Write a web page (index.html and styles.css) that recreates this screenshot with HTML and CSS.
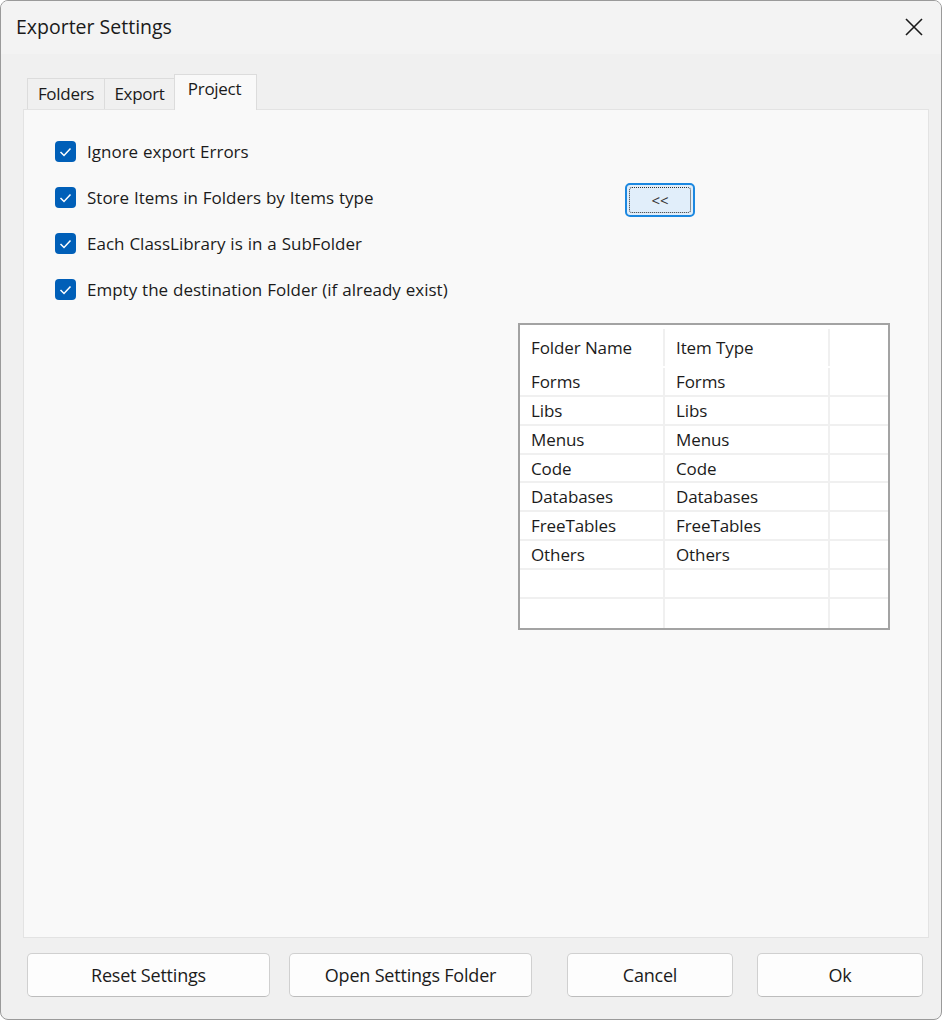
FILE: index.html
```html
<!DOCTYPE html>
<html>
<head>
<meta charset="utf-8">
<link rel="stylesheet" href="styles.css">
</head>
<body>
<div class="window">
  <div class="titlebar">
    <span class="title">Exporter Settings</span>
    <svg class="close" width="20" height="20" viewBox="0 0 20 20"><path d="M2 2 L18 18 M18 2 L2 18" stroke="#1a1a1a" stroke-width="1.6" fill="none"/></svg>
  </div>
  <div class="main">
    <div class="tabs">
      <div class="tab t1">Folders</div>
      <div class="tab t2">Export</div>
      <div class="tab active">Project</div>
    </div>
    <div class="panel">
      <div class="top">
        <div class="checks">
          <label class="check"><span class="box"><svg width="13" height="10" viewBox="0 0 13 10"><path d="M1.5 5 L5 8.5 L11.5 1.5" stroke="#fff" stroke-width="1.5" fill="none"/></svg></span>Ignore export Errors</label>
          <label class="check"><span class="box"><svg width="13" height="10" viewBox="0 0 13 10"><path d="M1.5 5 L5 8.5 L11.5 1.5" stroke="#fff" stroke-width="1.5" fill="none"/></svg></span>Store Items in Folders by Items type</label>
          <label class="check"><span class="box"><svg width="13" height="10" viewBox="0 0 13 10"><path d="M1.5 5 L5 8.5 L11.5 1.5" stroke="#fff" stroke-width="1.5" fill="none"/></svg></span>Each ClassLibrary is in a SubFolder</label>
          <label class="check"><span class="box"><svg width="13" height="10" viewBox="0 0 13 10"><path d="M1.5 5 L5 8.5 L11.5 1.5" stroke="#fff" stroke-width="1.5" fill="none"/></svg></span>Empty the destination Folder (if already exist)</label>
        </div>
        <button class="back"><span class="focus">&lt;&lt;</span></button>
      </div>
      <div class="grid">
        <div class="row head"><div class="c1">Folder Name</div><div class="c2">Item Type</div><div class="c3"></div></div>
        <div class="row"><div class="c1">Forms</div><div class="c2">Forms</div><div class="c3"></div></div>
        <div class="row"><div class="c1">Libs</div><div class="c2">Libs</div><div class="c3"></div></div>
        <div class="row"><div class="c1">Menus</div><div class="c2">Menus</div><div class="c3"></div></div>
        <div class="row"><div class="c1">Code</div><div class="c2">Code</div><div class="c3"></div></div>
        <div class="row"><div class="c1">Databases</div><div class="c2">Databases</div><div class="c3"></div></div>
        <div class="row"><div class="c1">FreeTables</div><div class="c2">FreeTables</div><div class="c3"></div></div>
        <div class="row"><div class="c1">Others</div><div class="c2">Others</div><div class="c3"></div></div>
        <div class="row"><div class="c1"></div><div class="c2"></div><div class="c3"></div></div>
        <div class="row last"><div class="c1"></div><div class="c2"></div><div class="c3"></div></div>
      </div>
    </div>
    <div class="buttons">
      <button class="btn wide">Reset Settings</button>
      <button class="btn wide">Open Settings Folder</button>
      <button class="btn narrow gap">Cancel</button>
      <button class="btn narrow end">Ok</button>
    </div>
  </div>
</div>
</body>
</html>
```
FILE: styles.css
```css
* { box-sizing: border-box; }
html, body { margin: 0; padding: 0; }
body {
  background: #ffffff;
  font-family: "Open Sans", "Noto Sans", Arial, sans-serif;
  color: #1b1b1b;
  width: 945px;
  height: 1023px;
  overflow: hidden;
}
.window {
  width: 942px;
  height: 1020px;
  border: 1px solid #9a9a9a;
  border-radius: 8px;
  background: #f0f0f0;
  display: flex;
  flex-direction: column;
  overflow: hidden;
}
.titlebar {
  height: 53px;
  background: #f3f3f3;
  display: flex;
  align-items: center;
  justify-content: space-between;
  padding: 0 17px 0 15px;
  flex: none;
}
.title {
  font-size: 19.5px;
  letter-spacing: 0;
  color: #1a1a1a;
  margin-top: -2px;
}
.close { margin-top: -2px; }
.main {
  flex: 1;
  display: flex;
  flex-direction: column;
  padding: 20px 12px 22px 22px;
}
.tabs {
  display: flex;
  align-items: flex-end;
  height: 35px;
  padding-left: 4px;
  flex: none;
}
.tab {
  height: 31px;
  border: 1px solid #dcdcdc;
  border-bottom: none;
  background: #f0f0f0;
  font-size: 17px;
  letter-spacing: -0.3px;
  padding: 3px 0 0 0;
  margin-right: -1px;
  color: #1b1b1b;
  text-align: center;
  flex: none;
}
.tab.t1 { width: 78px; }
.tab.t2 { width: 71px; }
.tab.active {
  width: 83px;
  height: 36px;
  background: #f9f9f9;
  padding-top: 2px;
  padding-right: 2px;
  position: relative;
  z-index: 1;
  margin-bottom: -1px;
}
.panel {
  flex: 1;
  background: #f9f9f9;
  border: 1px solid #e3e3e3;
  padding: 31px 0 0 31px;
}
.top {
  display: flex;
  align-items: flex-start;
}
.checks {
  width: 570px;
  display: flex;
  flex-direction: column;
  gap: 25px;
}
.check {
  display: flex;
  align-items: center;
  height: 21px;
  font-size: 17px;
  letter-spacing: 0;
  word-spacing: 0.5px;
  color: #1b1b1b;
}
.box {
  width: 21px;
  height: 21px;
  border-radius: 4px;
  background: #005fb8;
  display: flex;
  align-items: center;
  justify-content: center;
  margin-right: 11px;
  flex: none;
}
.back {
  margin-top: 42px;
  width: 70px;
  height: 34px;
  border: 2px solid #1c88e0;
  border-radius: 5px;
  background: #e1eefa;
  padding: 2px;
  font-family: inherit;
  display: flex;
}
.focus {
  flex: 1;
  border: 1px dotted #333;
  border-radius: 3px;
  display: flex;
  align-items: center;
  justify-content: center;
  font-size: 15px;
  color: #333;
  letter-spacing: 0;
}
.grid {
  margin-top: 23px;
  margin-left: 463px;
  width: 372px;
  height: 307px;
  border: 2px solid #a3a3a3;
  background: #ffffff;
  display: flex;
  flex-direction: column;
}
.row {
  display: flex;
  height: 29px;
  border-bottom: 2px solid #f0f0f0;
  font-size: 17px;
  letter-spacing: -0.1px;
}
.row.last { border-bottom: none; }
.row.head {
  height: 43px;
  border-bottom: none;
}
.row > div {
  display: flex;
  align-items: center;
  padding-left: 11px;
  border-right: 2px solid #f0f0f0;
}
.row.head > div {
  margin: 4px 0 2px 0;
}
.c1 { width: 145px; }
.c2 { width: 165px; }
.c3 { flex: 1; border-right: none !important; }
.buttons {
  flex: none;
  display: flex;
  margin-top: 15px;
  padding-left: 4px;
}
.btn {
  flex: none;
  height: 44px;
  border: 1px solid #d0d0d0;
  border-bottom-color: #bdbdbd;
  border-radius: 5px;
  background: #fdfdfd;
  font-family: inherit;
  font-size: 18px;
  letter-spacing: -0.2px;
  color: #1b1b1b;
  margin-right: 19px;
}
.btn.wide { width: 243px; }
.btn.narrow { width: 166px; margin-right: 24px; }
.btn.gap { margin-left: 16px; }
.btn.end { margin-right: 0; }
```
